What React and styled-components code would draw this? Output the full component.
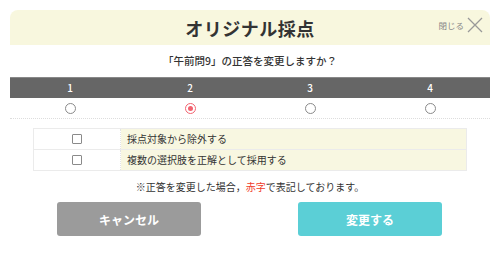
import React, { useState } from "react";
import styled, { createGlobalStyle } from "styled-components";

const GlobalStyle = createGlobalStyle`
  html, body {
    margin: 0;
    padding: 0;
    background: #fff;
    font-family: "Noto Sans CJK JP", "Noto Sans", sans-serif;
    color: #333;
  }
`;

const Modal = styled.div`
  width: 500px;
  height: 254px;
  box-sizing: border-box;
  padding: 10px 10px 0;
  background: #fff;
`;

const Header = styled.div`
  position: relative;
  height: 35px;
  background-color: #f8f7de;
  border-radius: 8px 8px 0 0;
  display: flex;
  align-items: center;
  justify-content: center;
`;

const Title = styled.h1`
  margin: 0;
  font-size: 18px;
  font-weight: 600;
  color: #333;
  letter-spacing: 0.5px;
`;

const Close = styled.div`
  position: absolute;
  right: 6px;
  top: 6px;
  display: flex;
  align-items: center;
  gap: 2px;
  font-size: 8.5px;
  color: #888;
  cursor: pointer;
`;

const Question = styled.p`
  margin: 0;
  height: 32px;
  line-height: 31px;
  text-align: center;
  font-size: 10.5px;
  font-weight: 500;
  color: #333;
`;

const Choices = styled.div`
  display: grid;
  grid-template-columns: repeat(4, 1fr);
  border-bottom: 1px dotted #ddd;
`;

const Num = styled.div`
  height: 20px;
  line-height: 20px;
  background: #666;
  color: #fff;
  text-align: center;
  font-size: 10px;
  font-weight: 500;
  border-top: 1px solid #888;
`;

const RadioCell = styled.div`
  height: 20px;
  display: flex;
  align-items: center;
  justify-content: center;
`;

const Radio = styled.span`
  width: 9px;
  height: 9px;
  border-radius: 50%;
  border: 1px solid ${(p) => (p.$on ? "#f26370" : "#8a8a8a")};
  display: flex;
  align-items: center;
  justify-content: center;
  background: #fff;
  &::after {
    content: "";
    width: 5px;
    height: 5px;
    border-radius: 50%;
    background: ${(p) => (p.$on ? "#f26370" : "transparent")};
  }
`;

const Options = styled.div`
  margin: 9px 23px 0;
  border: 1px solid #ebebeb;
`;

const OptionRow = styled.label`
  display: flex;
  height: 20px;
  & + & {
    border-top: 1px solid #ebebeb;
  }
`;

const BoxCell = styled.div`
  width: 86px;
  border-right: 1px dotted #e4e4e4;
  display: flex;
  align-items: center;
  justify-content: center;
  background: #fff;
`;

const Box = styled.span`
  width: 8px;
  height: 8px;
  border: 1px solid #8a8a8a;
  border-radius: 1px;
  background: #fff;
`;

const OptionText = styled.div`
  flex: 1;
  background: #f8f7e1;
  font-size: 10px;
  line-height: 20px;
  padding-left: 6px;
  color: #333;
`;

const Note = styled.p`
  margin: 0;
  height: 31px;
  line-height: 31px;
  text-align: center;
  font-size: 10px;
  color: #333;
`;

const Red = styled.span`
  color: #f03c2a;
`;

const Buttons = styled.div`
  display: flex;
  justify-content: space-between;
  padding: 0 48px 0 47px;
`;

const Button = styled.button`
  width: 144px;
  height: 34px;
  border: none;
  border-radius: 3px;
  background: ${(p) => (p.$primary ? "#5bcfd6" : "#9b9b9b")};
  color: #fff;
  font-family: inherit;
  font-size: 12px;
  font-weight: 600;
  cursor: pointer;
`;

function CloseIcon() {
  return (
    <svg width="18" height="18" viewBox="0 0 18 18">
      <path d="M2 2 L16 16 M16 2 L2 16" stroke="#999" strokeWidth="1.3" fill="none" />
    </svg>
  );
}

export default function App() {
  const [selected, setSelected] = useState(2);
  const nums = [1, 2, 3, 4];

  return (
    <>
      <GlobalStyle />
      <Modal>
        <Header>
          <Title>オリジナル採点</Title>
          <Close>
            閉じる
            <CloseIcon />
          </Close>
        </Header>
        <Question>「午前問9」の正答を変更しますか？</Question>
        <Choices>
          {nums.map((n) => (
            <Num key={"n" + n}>{n}</Num>
          ))}
          {nums.map((n) => (
            <RadioCell key={"r" + n} onClick={() => setSelected(n)}>
              <Radio $on={selected === n} />
            </RadioCell>
          ))}
        </Choices>
        <Options>
          <OptionRow>
            <BoxCell>
              <Box />
            </BoxCell>
            <OptionText>採点対象から除外する</OptionText>
          </OptionRow>
          <OptionRow>
            <BoxCell>
              <Box />
            </BoxCell>
            <OptionText>複数の選択肢を正解として採用する</OptionText>
          </OptionRow>
        </Options>
        <Note>
          ※正答を変更した場合，<Red>赤字</Red>で表記しております。
        </Note>
        <Buttons>
          <Button>キャンセル</Button>
          <Button $primary>変更する</Button>
        </Buttons>
      </Modal>
    </>
  );
}
